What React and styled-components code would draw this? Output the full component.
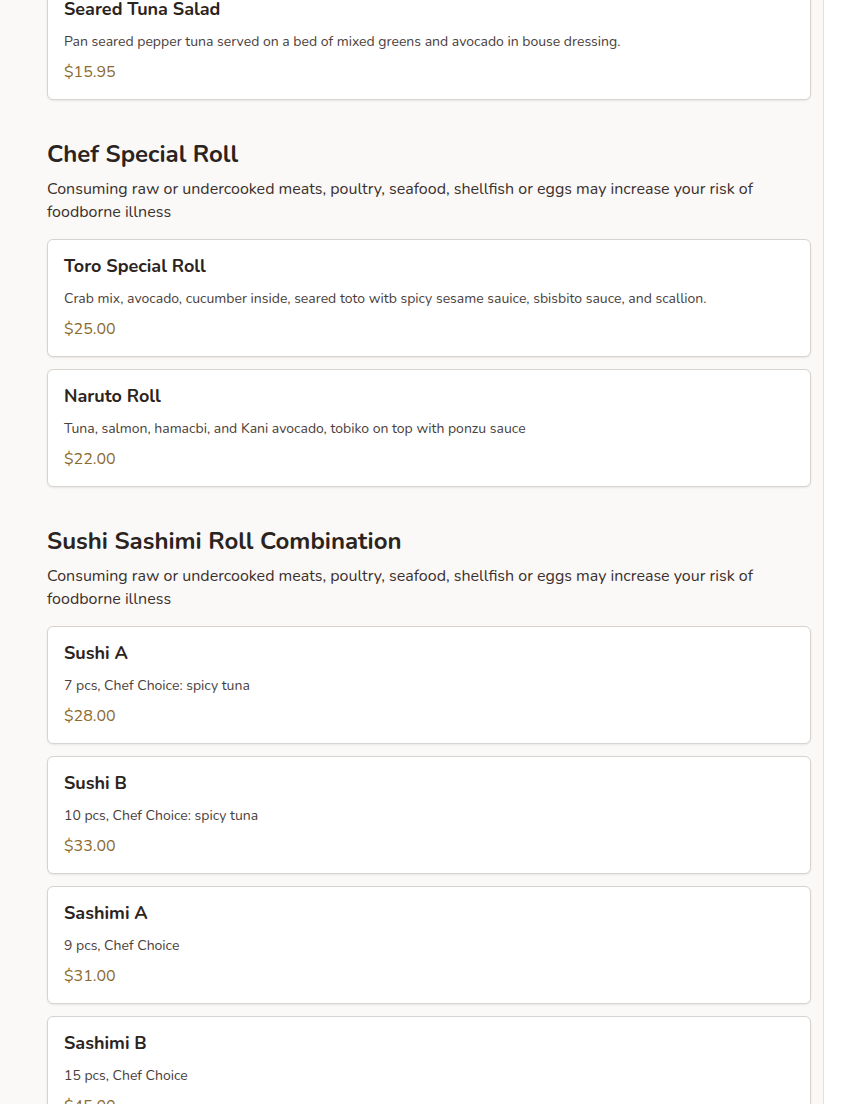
import styled, { createGlobalStyle } from "styled-components";

const GlobalStyle = createGlobalStyle`
    body {
        margin: 0;
        background: #ffffff;
        font-family: "Nunito", "Lato", "Noto Sans", sans-serif;
        color: #2b2320;
    }
`;

const Page = styled.main`
    width: 824px;
    min-height: 1104px;
    box-sizing: border-box;
    background: #faf9f8;
    border-right: 1px solid #e3e1df;
    padding: 0 12px 40px 47px;
    overflow: hidden;
`;

const Scrolled = styled.div`
    margin-top: -18px;
`;

const Section = styled.section`
    display: flex;
    flex-direction: column;
    gap: 12px;
    margin-bottom: 38px;
`;

const SectionHead = styled.div`
    margin-bottom: 3px;
`;

const SectionTitle = styled.h2`
    margin: 0 0 8px;
    font-size: 24px;
    line-height: 32px;
    font-weight: 700;
    color: #2b2320;
`;

const SectionNote = styled.p`
    margin: 0;
    font-size: 16px;
    line-height: 23px;
    color: #3a302c;
`;

const Card = styled.article`
    background: #ffffff;
    border: 1px solid #d6d3d0;
    border-radius: 6px;
    box-shadow: 0 1px 2px rgba(0, 0, 0, 0.08);
    padding: 13px 16px 16px;
    display: flex;
    flex-direction: column;
`;

const ItemName = styled.h3`
    margin: 0;
    font-size: 18px;
    line-height: 26px;
    font-weight: 700;
    color: #2b2320;
`;

const ItemDesc = styled.p`
    margin: 10px 0 0;
    font-size: 14px;
    line-height: 20px;
    color: #4a403b;
`;

const Price = styled.span`
    margin-top: 9px;
    font-size: 16px;
    line-height: 22px;
    color: #8a6a30;
`;

const warning =
    "Consuming raw or undercooked meats, poultry, seafood, shellfish or eggs may increase your risk of foodborne illness";

const sections = [
    {
        items: [
            {
                name: "Seared Tuna Salad",
                desc: "Pan seared pepper tuna served on a bed of mixed greens and avocado in bouse dressing.",
                price: "$15.95",
            },
        ],
    },
    {
        title: "Chef Special Roll",
        note: warning,
        items: [
            {
                name: "Toro Special Roll",
                desc: "Crab mix, avocado, cucumber inside, seared toto witb spicy sesame sauice, sbisbito sauce, and scallion.",
                price: "$25.00",
            },
            {
                name: "Naruto Roll",
                desc: "Tuna, salmon, hamacbi, and Kani avocado, tobiko on top with ponzu sauce",
                price: "$22.00",
            },
        ],
    },
    {
        title: "Sushi Sashimi Roll Combination",
        note: warning,
        items: [
            { name: "Sushi A", desc: "7 pcs, Chef Choice: spicy tuna", price: "$28.00" },
            { name: "Sushi B", desc: "10 pcs, Chef Choice: spicy tuna", price: "$33.00" },
            { name: "Sashimi A", desc: "9 pcs, Chef Choice", price: "$31.00" },
            { name: "Sashimi B", desc: "15 pcs, Chef Choice", price: "$45.00" },
        ],
    },
];

const App = () => {
    return (
        <>
            <GlobalStyle />
            <Page>
                <Scrolled>
                    {sections.map((s, i) => (
                        <Section key={i}>
                            {s.title && (
                                <SectionHead>
                                    <SectionTitle>{s.title}</SectionTitle>
                                    <SectionNote>{s.note}</SectionNote>
                                </SectionHead>
                            )}
                            {s.items.map((item) => (
                                <Card key={item.name}>
                                    <ItemName>{item.name}</ItemName>
                                    <ItemDesc>{item.desc}</ItemDesc>
                                    <Price>{item.price}</Price>
                                </Card>
                            ))}
                        </Section>
                    ))}
                </Scrolled>
            </Page>
        </>
    );
};

export default App;
